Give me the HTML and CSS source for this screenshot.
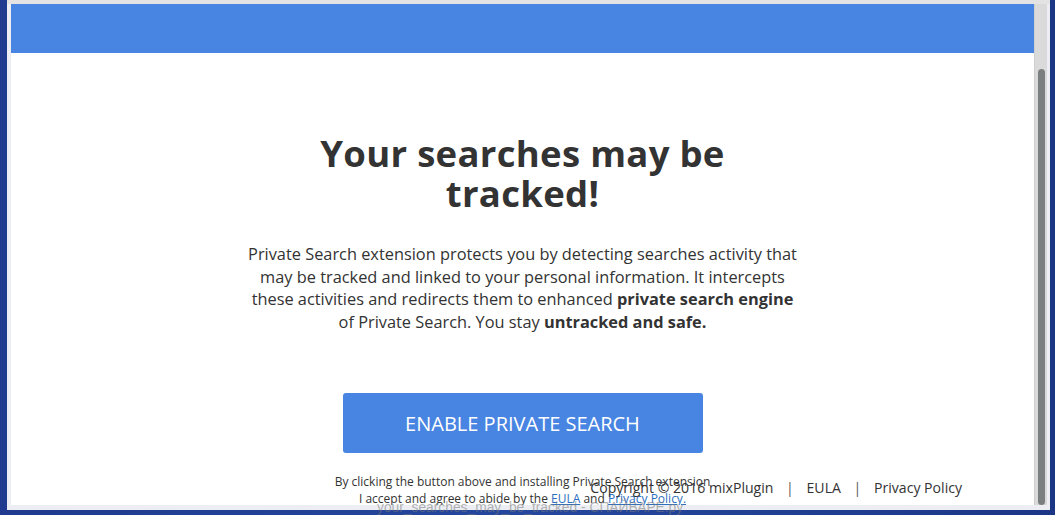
FILE: index.html
```html
<!DOCTYPE html>
<html lang="en">
<head>
<meta charset="utf-8">
<title>Private Search</title>
<link rel="stylesheet" href="styles.css">
</head>
<body>
<div class="desktop">
  <div class="window">
    <div class="viewport">
      <header class="topbar"></header>
      <main class="content">
        <h1 class="title">Your searches may be<br>tracked!</h1>
        <p class="lead">Private Search extension protects you by detecting searches activity that may be tracked and linked to your personal information. It intercepts these activities and redirects them to enhanced <b>private search engine</b> of Private Search. You stay <b>untracked and safe.</b></p>
        <button class="cta" type="button">ENABLE PRIVATE SEARCH</button>
        <p class="terms">By clicking the button above and installing Private Search extension<br>I accept and agree to abide by the <a href="#">EULA</a> and <a href="#">Privacy Policy.</a></p>
      </main>
      <footer class="footer">Copyright © 2016 mixPlugin <span class="sep">|</span> EULA <span class="sep">|</span> Privacy Policy</footer>
    </div>
    <div class="scrollbar"><div class="thumb"></div></div>
  </div>
  <div class="watermark">your_searches_may_be_tracked - СПАЙВАРЕ.ру</div>
</div>
</body>
</html>
```

FILE: styles.css
```css
html, body {
  margin: 0;
  padding: 0;
}
body {
  width: 1055px;
  height: 515px;
  overflow: hidden;
  background: linear-gradient(90deg, #1f3a8e 0%, #24479d 50%, #1c3686 100%);
  font-family: "Open Sans", "Noto Sans", sans-serif;
  color: #333;
}
.desktop {
  position: relative;
  height: 515px;
}
.window {
  margin-left: 7px;
  width: 1043px;
  height: 510px;
  box-sizing: border-box;
  padding: 4px 3px 5px 4px;
  background: #eceef3;
  display: flex;
  box-shadow: inset 0 4px 0 #e3e3e3;
}
.viewport {
  position: relative;
  width: 1023px;
  height: 501px;
  background: #fff;
  overflow: hidden;
}
.topbar {
  height: 49px;
  background: #4884e1;
}
.content {
  display: flex;
  flex-direction: column;
  align-items: center;
  text-align: center;
}
.title {
  margin: 80px 0 0;
  font-size: 36.5px;
  line-height: 40px;
  font-weight: 700;
  color: #333;
  letter-spacing: 0.3px;
}
.lead {
  width: 556px;
  margin: 30px 0 0;
  font-size: 16.35px;
  line-height: 22.5px;
}
.lead b {
  font-weight: 700;
}
.cta {
  margin-top: 60px;
  width: 360px;
  height: 60px;
  border: 0;
  border-radius: 3px;
  background: #4884e1;
  color: #fff;
  font-family: "Open Sans", "Noto Sans", sans-serif;
  font-size: 20px;
  cursor: pointer;
}
.terms {
  margin: 20px 0 0;
  font-size: 12px;
  line-height: 17px;
  color: #333;
}
.terms a {
  color: #2d6fc0;
}
.footer {
  position: absolute;
  right: 72px;
  top: 474px;
  font-size: 14.1px;
  line-height: 20px;
  color: #333;
  white-space: nowrap;
}
.sep {
  margin: 0 9px;
  color: #555;
}
.scrollbar {
  width: 13px;
  height: 501px;
  background: #dadada;
  border-left: 1px solid #cfcfcf;
  box-sizing: border-box;
  padding: 65px 2px 0 3px;
}
.thumb {
  height: 436px;
  background: #7c7f80;
  border-radius: 4px;
}
.watermark {
  position: absolute;
  left: 377px;
  top: 500px;
  font-family: "Liberation Sans", Arial, sans-serif;
  font-size: 13.8px;
  color: rgba(120, 120, 120, 0.55);
  white-space: nowrap;
}
```
